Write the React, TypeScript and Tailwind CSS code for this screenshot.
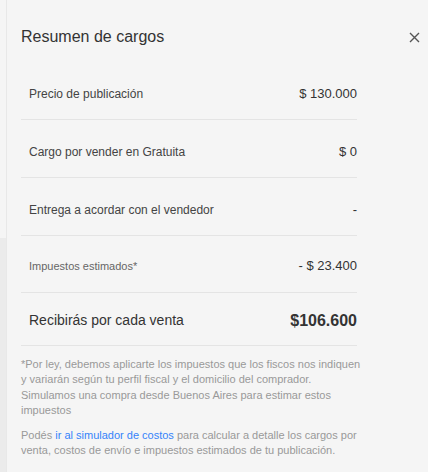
const rows = [
  { label: "Precio de publicación", value: "$ 130.000" },
  { label: "Cargo por vender en Gratuita", value: "$ 0" },
  { label: "Entrega a acordar con el vendedor", value: "-" },
];

export default function App() {
  return (
    <div className="flex w-[428px] h-[472px] overflow-hidden bg-[#f5f5f5] font-['Liberation_Sans',Arial,sans-serif]">
      <div className="flex flex-col w-[6px] shrink-0">
        <div className="h-[238px] bg-[#f5f5f5]" />
        <div className="flex-1 bg-[#ebebeb]" />
      </div>
      <div className="flex-1 border-l border-[#e8e8e8] pl-[14px]">
        <div className="flex items-center justify-between h-[20px] mt-[27px] w-[400px]">
          <h2 className="text-[16px] leading-[20px] text-[#333]">Resumen de cargos</h2>
          <svg width="11" height="11" viewBox="0 0 11 11" className="mr-[1px]">
            <path d="M1 1L10 10M10 1L1 10" stroke="#555" strokeWidth="1.4" />
          </svg>
        </div>

        <div className="w-[336px] mt-[15px]">
          {rows.map((r) => (
            <div
              key={r.label}
              className="flex items-center justify-between h-[58px] pt-[6px] pl-[8px] border-b border-[#e4e4e4] text-[12px] text-[#444]"
            >
              <span>{r.label}</span>
              <span className="text-[13px] text-[#333]">{r.value}</span>
            </div>
          ))}
          <div className="flex items-center justify-between h-[57px] pt-[4px] pl-[8px] border-b border-[#e4e4e4]">
            <span className="text-[11px] text-[#666]">Impuestos estimados*</span>
            <span className="text-[13px] text-[#333]">- $ 23.400</span>
          </div>
          <div className="flex items-center justify-between h-[53px] pt-[3px] pl-[8px] border-b border-[#e4e4e4]">
            <span className="text-[14px] text-[#333]">Recibirás por cada venta</span>
            <span className="text-[16px] font-bold text-[#333]">$106.600</span>
          </div>
        </div>

        <div className="w-[360px] text-[11px] leading-[15.3px] text-[#999]">
          <p className="mt-[11px]">
            *Por ley, debemos aplicarte los impuestos que los fiscos nos indiquen
            <br />
            y variarán según tu perfil fiscal y el domicilio del comprador.
            <br />
            Simulamos una compra desde Buenos Aires para estimar estos
            <br />
            impuestos
          </p>
          <p className="mt-[10px]">
            Podés <a className="text-[#3483fa]">ir al simulador de costos</a> para calcular a detalle los cargos por
            <br />
            venta, costos de envío e impuestos estimados de tu publicación.
          </p>
        </div>
      </div>
    </div>
  );
}
